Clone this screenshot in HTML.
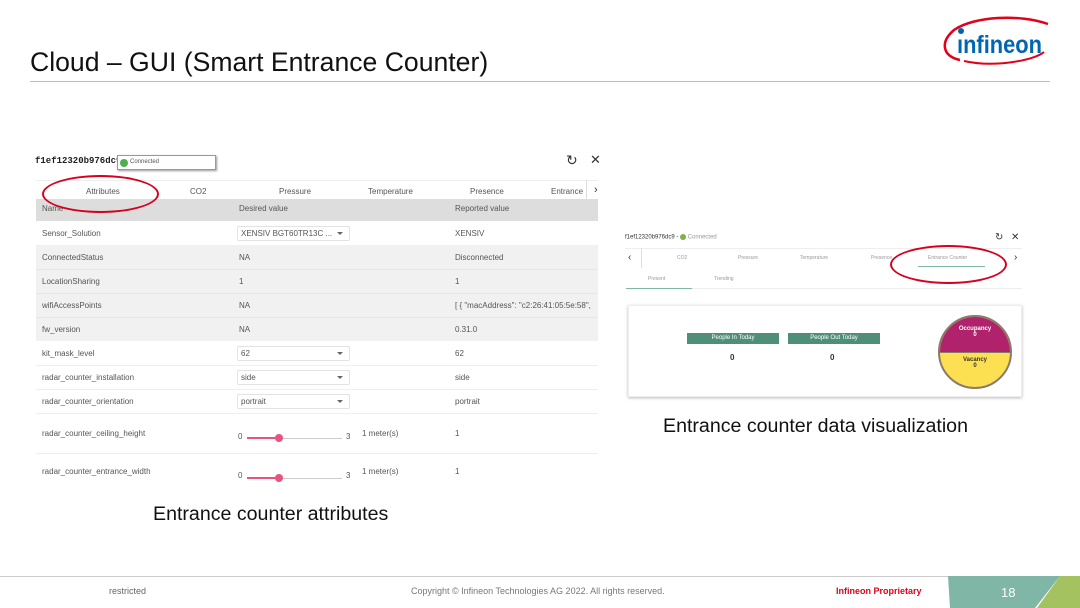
<!DOCTYPE html>
<html><head><meta charset="utf-8"><style>
*{margin:0;padding:0;box-sizing:border-box}
body{width:1080px;height:608px;position:relative;background:#fff;font-family:"Liberation Sans",sans-serif;overflow:hidden;color:#333}
.a{position:absolute;white-space:nowrap}
.s{font-size:8px;color:#555}
.row{position:absolute;left:36px;width:562px;height:24px}
.sel{position:absolute;left:237px;width:113px;height:15px;border:1px solid #e3e3e3;border-radius:2px;background:#fff}
.sel:after{content:"";position:absolute;right:6px;top:5px;border:3px solid transparent;border-top:3px solid #666}
</style></head><body>
<div class="a" style="left:30px;top:47px;font-size:26.6px;color:#111">Cloud – GUI (Smart Entrance Counter)</div>
<div class="a" style="left:30px;top:81px;width:1020px;height:1px;background:#bbb"></div>
<svg class="a" style="left:940px;top:14px" width="115" height="52" viewBox="0 0 115 52">
<path d="M20 46 C2 42 0 28 14 16 C34 2 80 0 108 10" fill="none" stroke="#e2001a" stroke-width="2.5"/>
<path d="M24 47 C55 54 95 46 104 38" fill="none" stroke="#e2001a" stroke-width="2"/>
<circle cx="21" cy="17" r="3" fill="#0066b3"/>
<text x="17" y="39" font-family="Liberation Sans" font-weight="bold" font-size="25" fill="#0066b3" textLength="85" lengthAdjust="spacingAndGlyphs">ınfineon</text>
</svg>

<!-- left panel -->
<div class="a" style="left:35px;top:156px;font-size:9px;font-family:'Liberation Mono',monospace;color:#222;font-weight:bold">f1ef12320b976dc9 -</div>
<div class="a" style="left:117px;top:155px;width:99px;height:15px;border:1px solid #999;box-shadow:1px 1px 2px #999;background:#fff"><span style="position:absolute;left:2px;top:3px;width:8px;height:8px;border-radius:50%;background:#4caf50"></span><span class="a s" style="left:12px;top:3px;font-size:6px">Connected</span></div>
<div class="a" style="left:566px;top:152px;font-size:14px;color:#333">↻</div>
<div class="a" style="left:590px;top:152px;font-size:13px;color:#333">✕</div>
<div class="a" style="left:36px;top:180px;width:562px;height:1px;background:#eee"></div>
<div class="a s" style="left:86px;top:187px">Attributes</div>
<div class="a s" style="left:190px;top:187px">CO2</div>
<div class="a s" style="left:279px;top:187px">Pressure</div>
<div class="a s" style="left:368px;top:187px">Temperature</div>
<div class="a s" style="left:470px;top:187px">Presence</div>
<div class="a s" style="left:551px;top:187px">Entrance</div>
<div class="a" style="left:586px;top:180px;width:1px;height:26px;background:#ddd"></div>
<div class="a" style="left:594px;top:184px;font-size:11px">›</div>
<div class="a" style="left:50px;top:203px;width:100px;height:2px;background:#7fb8a6"></div>
<div class="row" style="top:199px;height:22px;background:#ddd"></div>
<div class="a s" style="left:42px;top:204px">Name</div><div class="a s" style="left:239px;top:204px">Desired value</div><div class="a s" style="left:455px;top:204px">Reported value</div>
<div class="row" style="top:245px;height:96px;background:#f1f1f1"></div>
<div class="row" style="top:269px;height:1px;background:#e6e6e6"></div>
<div class="row" style="top:293px;height:1px;background:#e6e6e6"></div>
<div class="row" style="top:317px;height:1px;background:#e6e6e6"></div>
<div class="row" style="top:365px;height:1px;background:#eee"></div>
<div class="row" style="top:389px;height:1px;background:#eee"></div>
<div class="row" style="top:413px;height:1px;background:#eee"></div>
<div class="row" style="top:453px;height:1px;background:#eee"></div>
<div class="sel" style="top:226px"></div><div class="a s" style="left:241px;top:229px">XENSIV BGT60TR13C ...</div>
<div class="a s" style="left:42px;top:229px">Sensor_Solution</div><div class="a s" style="left:455px;top:229px">XENSIV</div>
<div class="a s" style="left:42px;top:253px">ConnectedStatus</div><div class="a s" style="left:239px;top:253px">NA</div><div class="a s" style="left:455px;top:253px">Disconnected</div>
<div class="a s" style="left:42px;top:277px">LocationSharing</div><div class="a s" style="left:239px;top:277px">1</div><div class="a s" style="left:455px;top:277px">1</div>
<div class="a s" style="left:42px;top:301px">wifiAccessPoints</div><div class="a s" style="left:239px;top:301px">NA</div><div class="a s" style="left:455px;top:301px">[ { "macAddress": "c2:26:41:05:5e:58",</div>
<div class="a s" style="left:42px;top:325px">fw_version</div><div class="a s" style="left:239px;top:325px">NA</div><div class="a s" style="left:455px;top:325px">0.31.0</div>
<div class="sel" style="top:346px"></div><div class="a s" style="left:42px;top:349px">kit_mask_level</div><div class="a s" style="left:241px;top:349px">62</div><div class="a s" style="left:455px;top:349px">62</div>
<div class="sel" style="top:370px"></div><div class="a s" style="left:42px;top:373px">radar_counter_installation</div><div class="a s" style="left:241px;top:373px">side</div><div class="a s" style="left:455px;top:373px">side</div>
<div class="sel" style="top:394px"></div><div class="a s" style="left:42px;top:397px">radar_counter_orientation</div><div class="a s" style="left:241px;top:397px">portrait</div><div class="a s" style="left:455px;top:397px">portrait</div>
<div class="a s" style="left:42px;top:429px">radar_counter_ceiling_height</div><div class="a s" style="left:238px;top:432px">0</div>
<div class="a" style="left:247px;top:438px;width:95px;height:1px;background:#ccc"></div><div class="a" style="left:247px;top:437px;width:32px;height:2px;background:#e8537f"></div><div class="a" style="left:275px;top:434px;width:8px;height:8px;border-radius:50%;background:#e8537f"></div>
<div class="a s" style="left:346px;top:432px">3</div><div class="a s" style="left:362px;top:429px">1 meter(s)</div><div class="a s" style="left:455px;top:429px">1</div>
<div class="a s" style="left:42px;top:467px">radar_counter_entrance_width</div><div class="a s" style="left:238px;top:471px">0</div>
<div class="a" style="left:247px;top:478px;width:95px;height:1px;background:#ccc"></div><div class="a" style="left:247px;top:477px;width:32px;height:2px;background:#e8537f"></div><div class="a" style="left:275px;top:474px;width:8px;height:8px;border-radius:50%;background:#e8537f"></div>
<div class="a s" style="left:346px;top:471px">3</div><div class="a s" style="left:362px;top:467px">1 meter(s)</div><div class="a s" style="left:455px;top:467px">1</div>
<div class="a" style="left:42px;top:175px;width:117px;height:38px;border:2px solid #d7001e;border-radius:50%"></div>
<div class="a" style="left:153px;top:503px;font-size:19.6px;color:#111">Entrance counter attributes</div>

<!-- right panel -->
<div class="a" style="left:625px;top:234px;font-size:6px;color:#333">f1ef12320b976dc9 - <span style="display:inline-block;width:6px;height:6px;border-radius:50%;background:#7cb342;vertical-align:middle"></span> <span style="color:#999">Connected</span></div>
<div class="a" style="left:995px;top:232px;font-size:10px">↻</div><div class="a" style="left:1011px;top:232px;font-size:10px">✕</div>
<div class="a" style="left:625px;top:248px;width:397px;height:1px;background:#eee"></div>
<div class="a" style="left:628px;top:252px;font-size:10px">‹</div><div class="a" style="left:641px;top:248px;width:1px;height:20px;background:#ddd"></div>
<div class="a" style="left:677px;top:255px;font-size:5px;color:#999">CO2</div>
<div class="a" style="left:738px;top:255px;font-size:5px;color:#999">Pressure</div>
<div class="a" style="left:800px;top:255px;font-size:5px;color:#999">Temperature</div>
<div class="a" style="left:871px;top:255px;font-size:5px;color:#999">Presence</div>
<div class="a" style="left:928px;top:255px;font-size:5px;color:#999">Entrance Counter</div>
<div class="a" style="left:918px;top:266px;width:67px;height:1px;background:#7fb8a6"></div>
<div class="a" style="left:1014px;top:252px;font-size:10px">›</div>
<div class="a" style="left:648px;top:276px;font-size:5px;color:#999">Present</div><div class="a" style="left:714px;top:276px;font-size:5px;color:#999">Trending</div>
<div class="a" style="left:626px;top:288px;width:66px;height:1px;background:#7fb8a6"></div>
<div class="a" style="left:692px;top:288px;width:330px;height:1px;background:#eee"></div>
<div class="a" style="left:628px;top:305px;width:394px;height:92px;background:#fff;box-shadow:0 1px 3px #bbb;border:1px solid #eee"></div>
<div class="a" style="left:687px;top:333px;width:92px;height:11px;background:#4f8f79;color:#fff;font-size:6px;text-align:center;line-height:11px">People In Today</div>
<div class="a" style="left:788px;top:333px;width:92px;height:11px;background:#4f8f79;color:#fff;font-size:6px;text-align:center;line-height:11px">People Out Today</div>
<div class="a" style="left:730px;top:353px;font-size:8px;font-weight:bold">0</div><div class="a" style="left:830px;top:353px;font-size:8px;font-weight:bold">0</div>
<div class="a" style="left:938px;top:315px;width:74px;height:74px;border-radius:50%;border:2px solid #8a7a6a;overflow:hidden;background:#fde052">
<div style="height:35px;background:#b0226b;color:#fff;font-size:6px;text-align:center;padding-top:9px;font-weight:bold">Occupancy<br>0</div>
<div style="height:1px;background:#8a7a6a"></div>
<div style="font-size:6px;text-align:center;padding-top:4px;font-weight:bold;color:#333">Vacancy<br>0</div></div>
<div class="a" style="left:890px;top:245px;width:117px;height:39px;border:2px solid #d7001e;border-radius:50%"></div>
<div class="a" style="left:663px;top:415px;font-size:19.6px;color:#111">Entrance counter data visualization</div>

<!-- footer -->
<div class="a" style="left:0;top:576px;width:1080px;height:1px;background:#ccc"></div>
<div class="a" style="left:109px;top:586px;font-size:9px;color:#666">restricted</div>
<div class="a" style="left:411px;top:586px;font-size:9px;color:#777">Copyright © Infineon Technologies AG 2022. All rights reserved.</div>
<div class="a" style="left:836px;top:586px;font-size:9px;color:#e2001a;font-weight:bold">Infineon Proprietary</div>
<svg class="a" style="left:948px;top:576px" width="132" height="32"><polygon points="0,0 112,0 87,32 2,32" fill="#80b6a6"/><polygon points="112,0 132,0 132,32 89,32" fill="#a5c261"/></svg>
<div class="a" style="left:1001px;top:585px;font-size:13px;color:#fff">18</div>
</body></html>
